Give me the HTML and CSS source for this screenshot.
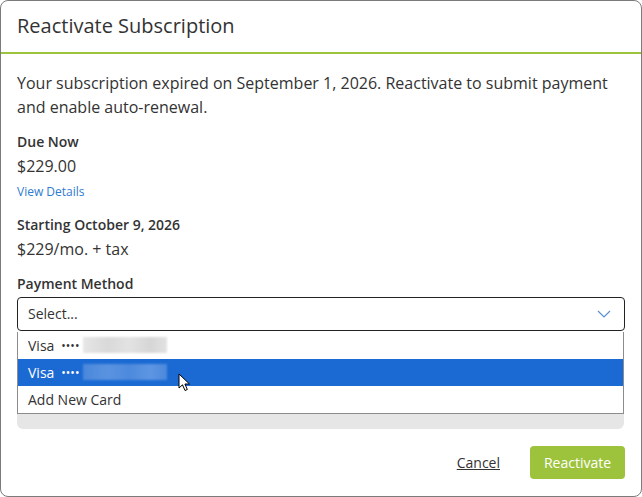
FILE: index.html
```html
<!DOCTYPE html>
<html>
<head>
<meta charset="utf-8">
<link rel="stylesheet" href="styles.css">
</head>
<body>
<div class="dialog">
  <div class="header"><h1 class="title">Reactivate Subscription</h1></div>
  <div class="content">
    <p class="intro">Your subscription expired on September 1, 2026. Reactivate to submit payment and enable auto-renewal.</p>
    <div class="label l-due">Due Now</div>
    <div class="amount">$229.00</div>
    <a class="link">View Details</a>
    <div class="label l-start">Starting October 9, 2026</div>
    <div class="amount">$229/mo. + tax</div>
    <div class="label l-pay">Payment Method</div>
    <div class="select-wrap">
      <div class="select">
        <span>Select...</span>
        <svg class="chev" width="14" height="8" viewBox="0 0 14 8"><path d="M1 1 L7 7 L13 1" fill="none" stroke="#5a8fd2" stroke-width="1.2"/></svg>
      </div>
      <div class="options">
        <div class="opt"><span>Visa</span><span class="dots">••••</span><span class="blur"></span></div>
        <div class="opt active"><span>Visa</span><span class="dots">••••</span><span class="blur"></span></div>
        <div class="opt"><span>Add New Card</span></div>
      </div>
      <svg class="cursor" width="14" height="20" viewBox="0 0 14 20"><path d="M1 1 L1 15 L4.5 11.8 L7 17.5 L9.3 16.5 L6.9 11 L11.5 11 Z" fill="#fff" stroke="#000" stroke-width="1" stroke-linejoin="round"/></svg>
    </div>
    <div class="info"></div>
  </div>
  <div class="footer">
    <a class="cancel">Cancel</a>
    <button class="primary">Reactivate</button>
  </div>
</div>
</body>
</html>
```
FILE: styles.css
```css
* { box-sizing: border-box; }
html, body { margin: 0; padding: 0; background: #fff; }
body { font-family: "Open Sans", "Noto Sans", sans-serif; color: #333; }
.dialog {
  width: 642px; height: 497px;
  border: 1px solid #7b7b7b; border-radius: 8px;
  display: flex; flex-direction: column;
  overflow: hidden;
}
.header {
  height: 54px;
  border-bottom: 2px solid #9dc33c;
  padding: 0 16px;
  display: flex; align-items: center;
}
.title { margin: 0; font-size: 20px; font-weight: 400; color: #333; line-height: 26px; }
.content { padding: 17px 16px 0 16px; display: flex; flex-direction: column; }
.intro { margin: 0; font-size: 16px; line-height: 24px; }
.label { font-size: 14px; font-weight: 600; line-height: 20px; }
.l-due { margin-top: 13px; }
.l-start { margin-top: 14px; }
.l-pay { margin-top: 13px; }
.amount { font-size: 16px; line-height: 24px; margin-top: 2px; }
.link { font-size: 12px; line-height: 18px; color: #2e7bcf; margin-top: 5px; }
.select-wrap { position: relative; margin-top: 3px; }
.select {
  height: 34px; border: 1.5px solid #222; border-radius: 4px;
  display: flex; align-items: center; justify-content: space-between;
  padding: 0 13px 0 10px; font-size: 14px; color: #333;
  position: relative; z-index: 2; background: #fff;
}
.chev { margin-top: 1px; }
.options {
  position: absolute; left: 0; right: 1px; top: 35px;
  border: 1px solid #8c8c8c; border-top: none; background: #fff; z-index: 3;
}
.opt {
  height: 27px; display: flex; align-items: center; padding: 0 10px;
  font-size: 14px; color: #333;
}
.opt.active { background: #1b69d3; color: #fff; }
.dots { margin-left: 7px; font-size: 12px; font-weight: 400; letter-spacing: 0; }
.blur {
  display: inline-block; width: 84px; height: 16px; margin-left: 4px;
  background: linear-gradient(90deg, #e6e6e6, #d9d9d9 30%, #e3e3e3 55%, #d6d6d6 80%, #e2e2e2);
  filter: blur(1.2px);
}
.opt.active .blur { background: linear-gradient(90deg, #4a87dc, #5a93e0 30%, #4c89dd 55%, #5e96e2 80%, #4b88dc); }
.cursor { position: absolute; left: 161px; top: 76px; z-index: 4; }
.info {
  margin-top: 10px; height: 88px; background: #e6e6e6; border-radius: 0 0 6px 6px;
  margin-right: 1px;
}
.footer {
  margin-top: auto; height: 68px;
  display: flex; align-items: flex-start; justify-content: flex-end;
  padding: 17px 16px 0 0; gap: 30px;
}
.cancel {
  font-size: 14px; color: #333; text-decoration: underline; line-height: 33px;
}
.primary {
  height: 33px; width: 95px; border: none; border-radius: 4px;
  background: #9dc33c; color: #fff; font-family: inherit; font-size: 14px;
}
```
